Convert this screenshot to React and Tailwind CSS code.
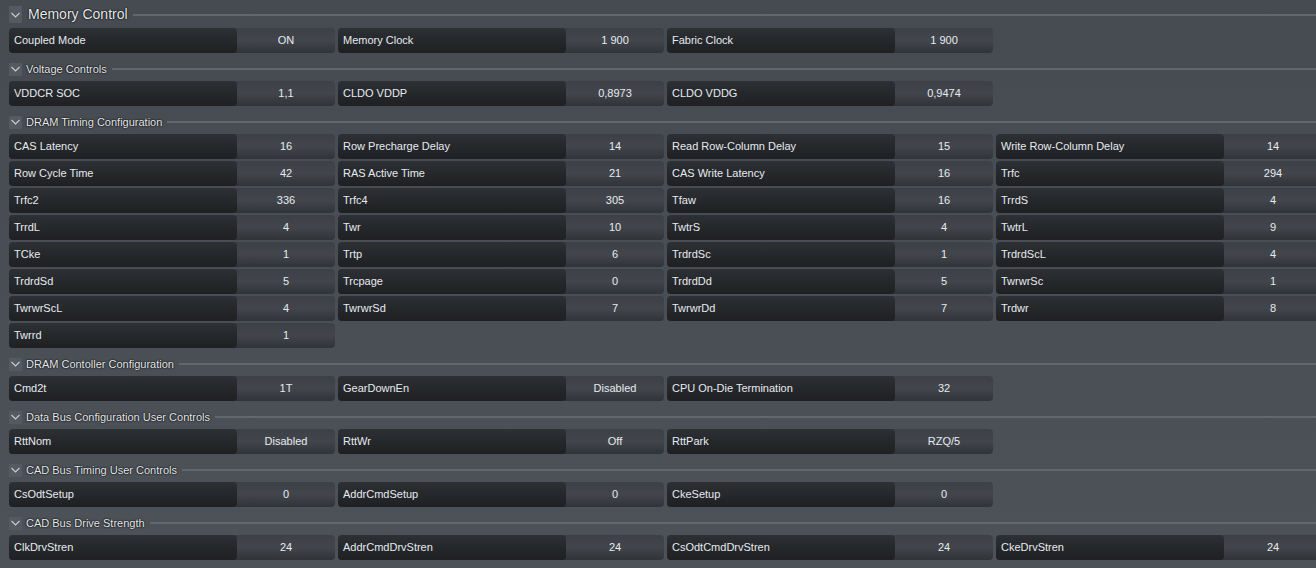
import React from 'react';

const sections = [
  {
    title: "Memory Control",
    big: true,
    items: [
      ["Coupled Mode", "ON"],
      ["Memory Clock", "1 900"],
      ["Fabric Clock", "1 900"],
    ],
  },
  {
    title: "Voltage Controls",
    items: [
      ["VDDCR SOC", "1,1"],
      ["CLDO VDDP", "0,8973"],
      ["CLDO VDDG", "0,9474"],
    ],
  },
  {
    title: "DRAM Timing Configuration",
    items: [
      ["CAS Latency", "16"], ["Row Precharge Delay", "14"], ["Read Row-Column Delay", "15"], ["Write Row-Column Delay", "14"],
      ["Row Cycle Time", "42"], ["RAS Active Time", "21"], ["CAS Write Latency", "16"], ["Trfc", "294"],
      ["Trfc2", "336"], ["Trfc4", "305"], ["Tfaw", "16"], ["TrrdS", "4"],
      ["TrrdL", "4"], ["Twr", "10"], ["TwtrS", "4"], ["TwtrL", "9"],
      ["TCke", "1"], ["Trtp", "6"], ["TrdrdSc", "1"], ["TrdrdScL", "4"],
      ["TrdrdSd", "5"], ["Trcpage", "0"], ["TrdrdDd", "5"], ["TwrwrSc", "1"],
      ["TwrwrScL", "4"], ["TwrwrSd", "7"], ["TwrwrDd", "7"], ["Trdwr", "8"],
      ["Twrrd", "1"],
    ],
  },
  {
    title: "DRAM Contoller Configuration",
    items: [
      ["Cmd2t", "1T"],
      ["GearDownEn", "Disabled"],
      ["CPU On-Die Termination", "32"],
    ],
  },
  {
    title: "Data Bus Configuration User Controls",
    items: [
      ["RttNom", "Disabled"],
      ["RttWr", "Off"],
      ["RttPark", "RZQ/5"],
    ],
  },
  {
    title: "CAD Bus Timing User Controls",
    items: [
      ["CsOdtSetup", "0"],
      ["AddrCmdSetup", "0"],
      ["CkeSetup", "0"],
    ],
  },
  {
    title: "CAD Bus Drive Strength",
    items: [
      ["ClkDrvStren", "24"],
      ["AddrCmdDrvStren", "24"],
      ["CsOdtCmdDrvStren", "24"],
      ["CkeDrvStren", "24"],
    ],
  },
];

function Chevron({ big }) {
  return (
    <div className={`flex items-center justify-center bg-[#555a61] w-[13px] ${big ? 'h-[17px]' : 'h-[13px]'}`}>
      <svg width="9" height="6" viewBox="0 0 9 6" fill="none">
        <path d="M0.5 1 L4.5 5 L8.5 1" stroke="#c9cdd2" strokeWidth="1.1" />
      </svg>
    </div>
  );
}

function Header({ title, big }) {
  return (
    <div className={`flex items-center pl-[9px] ${big ? 'pt-[6px] h-[23px] mb-[5px]' : 'h-[14px] mt-[9px] mb-[5px]'}`}>
      <Chevron big={big} />
      <span className={`whitespace-nowrap text-[#e8ebee] [text-shadow:0_0_2px_#000,0_0_1px_#000] ${big ? 'ml-[6px] text-[14px]' : 'ml-[4px] text-[11px]'}`}>
        {title}
      </span>
      <div className="ml-[5px] flex-1 h-[2px] bg-[#61676e]" />
    </div>
  );
}

function Cell({ label, value }) {
  return (
    <div className="flex h-[25px] w-[326px] rounded-[4px] bg-gradient-to-b from-[#3d4147] via-[#42464c] to-[#303337] text-[11px] text-[#e6ebf0]">
      <div className="flex items-center w-[228px] rounded-[4px] pl-[5px] bg-gradient-to-b from-[#2d3034] to-[#1e2023] whitespace-nowrap">
        {label}
      </div>
      <div className="flex-1 flex items-center justify-center whitespace-nowrap">{value}</div>
    </div>
  );
}

export default function App() {
  return (
    <div
      className="w-[1316px] h-[568px] overflow-hidden bg-gradient-to-b from-[#464b52] to-[#4c5258]"
      style={{ fontFamily: '"Liberation Sans", Arial, sans-serif' }}
    >
      {sections.map((s) => (
        <div key={s.title}>
          <Header title={s.title} big={s.big} />
          <div className="grid grid-cols-[repeat(4,326px)] gap-x-[3px] gap-y-[2px] pl-[9px]">
            {s.items.map(([l, v]) => (
              <Cell key={l} label={l} value={v} />
            ))}
          </div>
        </div>
      ))}
    </div>
  );
}
